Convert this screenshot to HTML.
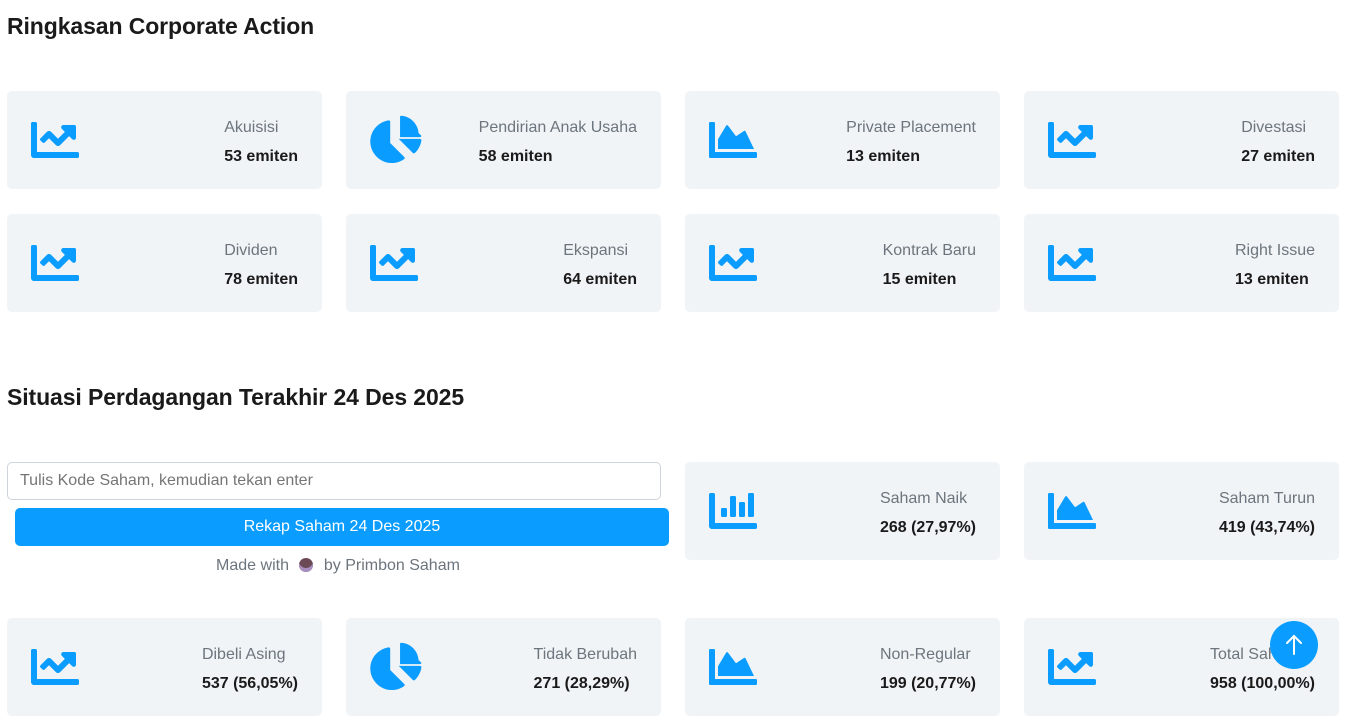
<!DOCTYPE html>
<html><head><meta charset="utf-8"><style>
*{box-sizing:border-box;margin:0;padding:0}
body{width:1351px;height:715px;overflow:hidden;background:#fff;font-family:"Liberation Sans",sans-serif;color:#212529;position:relative}
h2{position:absolute;left:7px;font-size:23px;font-weight:bold;color:#1a1a1a;letter-spacing:-0.1px}
.c{position:absolute;width:315px;height:98px;background:#f1f4f7;border-radius:5px}
.c svg{position:absolute;left:24px;top:29px;width:48px;height:40px;fill:#0a9dff}
.t{position:absolute;right:24px;top:27px}
.l{font-size:16px;line-height:20px;color:#6c757d}
.v{font-size:16px;line-height:20px;font-weight:bold;margin-top:9px;color:#1a1a1a}
input{position:absolute;left:7px;top:462px;width:654px;height:38px;border:1px solid #ced4da;border-radius:5px;font-family:"Liberation Sans",sans-serif;font-size:16px;padding-left:12px;color:#6c757d}
.btn{position:absolute;left:15px;top:508px;width:654px;height:38px;background:#0a9dff;border-radius:5px;color:#fff;font-size:16px;text-align:center;line-height:38px}
.made{position:absolute;left:0;width:676px;top:557px;text-align:center;font-size:16px;color:#6c757d}
.up{position:absolute;left:1270px;top:621px;width:48px;height:48px;border-radius:50%;background:#0a9dff}
.c svg.p{left:23px;top:24px;width:53px;height:50px}
</style></head><body>
<svg width="0" height="0" style="position:absolute">
<defs>
<symbol id="line" viewBox="0 64 512 384"><path d="M496 384H64V80c0-8.840-7.16-16-16-16H16C7.16 64 0 71.16 0 80v336c0 17.67 14.33 32 32 32h464c8.84 0 16-7.16 16-16v-32c0-8.84-7.16-16-16-16zM464 96H345.94c-21.38 0-32.09 25.85-16.97 40.97l32.4 32.4L288 242.75l-73.37-73.37c-12.5-12.5-32.76-12.5-45.25 0l-68.69 68.69c-6.25 6.25-6.25 16.38 0 22.63l22.62 22.62c6.25 6.25 16.38 6.25 22.63 0L192 237.25l73.37 73.37c12.5 12.5 32.76 12.5 45.25 0l96-96 32.4 32.4c15.12 15.12 40.97 4.41 40.97-16.97V112c.01-8.84-7.15-16-15.99-16z"/></symbol>
<symbol id="pie" viewBox="0 0 560 512"><path d="M538.54 243.54H314.13l149.46 149.46c5.71 5.71 15.11 6.17 20.98.64 36.6-34.48 61.78-80.96 69.17-133.21 1.27-8.95-6.16-16.89-15.2-16.89zm-14.96-61.27C516.94 85.15 438.5 6.71 341.37.07c-7.41-.51-13.37 5.84-13.37 13.23v211.73h211.75c7.41 0 13.76-5.95 13.24-13.36zM224 288V63.71c0-9.03-7.94-16.46-16.89-15.2C95.42 64.31 9.87 162.74 13.85 280.67 17.94 401.77 122.22 501.13 243.39 499.6c47.63-.6 91.64-15.95 127.83-41.74 7.47-5.32 7.96-16.37 1.47-22.86L224 288z"/></symbol>
<symbol id="area" viewBox="0 64 512 384"><path d="M500 384c6.6 0 12 5.4 12 12v40c0 6.6-5.4 12-12 12H12c-6.6 0-12-5.4-12-12V76c0-6.6 5.4-12 12-12h40c6.6 0 12 5.4 12 12v308h436zM372.7 159.5L288 216l-85.3-113.7c-5.1-6.8-15.5-6.3-19.9 1L96 248v104h384l-89.9-187.8c-3.2-6.5-11.4-8.7-17.4-4.7z"/></symbol>
<symbol id="bar" viewBox="0 64 512 384"><path d="M332.8 320h38.4c6.4 0 12.8-6.4 12.8-12.8V172.8c0-6.4-6.4-12.8-12.8-12.8h-38.4c-6.4 0-12.8 6.4-12.8 12.8v134.4c0 6.4 6.4 12.8 12.8 12.8zm96 0h38.4c6.4 0 12.8-6.4 12.8-12.8V76.8c0-6.4-6.4-12.8-12.8-12.8h-38.4c-6.4 0-12.8 6.4-12.8 12.8v230.4c0 6.4 6.4 12.8 12.8 12.8zm-288 0h38.4c6.4 0 12.8-6.4 12.8-12.8v-70.4c0-6.4-6.4-12.8-12.8-12.8h-38.4c-6.4 0-12.8 6.4-12.8 12.8v70.4c0 6.4 6.4 12.8 12.8 12.8zm96 0h38.4c6.4 0 12.8-6.4 12.8-12.8V108.8c0-6.4-6.4-12.8-12.8-12.8h-38.4c-6.4 0-12.8 6.4-12.8 12.8v198.4c0 6.4 6.4 12.8 12.8 12.8zM496 384H64V80c0-8.84-7.16-16-16-16H16C7.16 64 0 71.16 0 80v336c0 17.67 14.33 32 32 32h464c8.84 0 16-7.16 16-16v-32c0-8.84-7.16-16-16-16z"/></symbol>
</defs></svg>

<h2 style="top:13px">Ringkasan Corporate Action</h2>

<div class="c" style="left:7px;top:91px"><svg><use href="#line"/></svg><div class="t"><div class="l">Akuisisi</div><div class="v">53 emiten</div></div></div>
<div class="c" style="left:346px;top:91px"><svg class="p"><use href="#pie"/></svg><div class="t"><div class="l">Pendirian Anak Usaha</div><div class="v">58 emiten</div></div></div>
<div class="c" style="left:685px;top:91px"><svg><use href="#area"/></svg><div class="t"><div class="l">Private Placement</div><div class="v">13 emiten</div></div></div>
<div class="c" style="left:1024px;top:91px"><svg><use href="#line"/></svg><div class="t"><div class="l">Divestasi</div><div class="v">27 emiten</div></div></div>

<div class="c" style="left:7px;top:214px"><svg><use href="#line"/></svg><div class="t"><div class="l">Dividen</div><div class="v">78 emiten</div></div></div>
<div class="c" style="left:346px;top:214px"><svg><use href="#line"/></svg><div class="t"><div class="l">Ekspansi</div><div class="v">64 emiten</div></div></div>
<div class="c" style="left:685px;top:214px"><svg><use href="#line"/></svg><div class="t"><div class="l">Kontrak Baru</div><div class="v">15 emiten</div></div></div>
<div class="c" style="left:1024px;top:214px"><svg><use href="#line"/></svg><div class="t"><div class="l">Right Issue</div><div class="v">13 emiten</div></div></div>

<h2 style="top:384px">Situasi Perdagangan Terakhir 24 Des 2025</h2>

<input placeholder="Tulis Kode Saham, kemudian tekan enter">
<div class="btn">Rekap Saham 24 Des 2025</div>
<div class="made">Made with <span style="display:inline-block;width:14px;height:14px;border-radius:50%;background:#6b4a55;box-shadow:inset 0 -4px 0 #a98fc0;vertical-align:-2px;margin:0 6px"></span> by Primbon Saham</div>

<div class="c" style="left:685px;top:462px"><svg><use href="#bar"/></svg><div class="t"><div class="l">Saham Naik</div><div class="v">268 (27,97%)</div></div></div>
<div class="c" style="left:1024px;top:462px"><svg><use href="#area"/></svg><div class="t"><div class="l">Saham Turun</div><div class="v">419 (43,74%)</div></div></div>

<div class="c" style="left:7px;top:618px"><svg><use href="#line"/></svg><div class="t"><div class="l">Dibeli Asing</div><div class="v">537 (56,05%)</div></div></div>
<div class="c" style="left:346px;top:618px"><svg class="p"><use href="#pie"/></svg><div class="t"><div class="l">Tidak Berubah</div><div class="v">271 (28,29%)</div></div></div>
<div class="c" style="left:685px;top:618px"><svg><use href="#area"/></svg><div class="t"><div class="l">Non-Regular</div><div class="v">199 (20,77%)</div></div></div>
<div class="c" style="left:1024px;top:618px"><svg><use href="#line"/></svg><div class="t"><div class="l">Total Saham</div><div class="v">958 (100,00%)</div></div></div>

<div class="up"><svg width="48" height="48" viewBox="0 0 48 48"><path d="M24 15v18M17 22l7-7 7 7" stroke="#fff" stroke-width="2" fill="none" stroke-linecap="round"/></svg></div>
</body></html>
